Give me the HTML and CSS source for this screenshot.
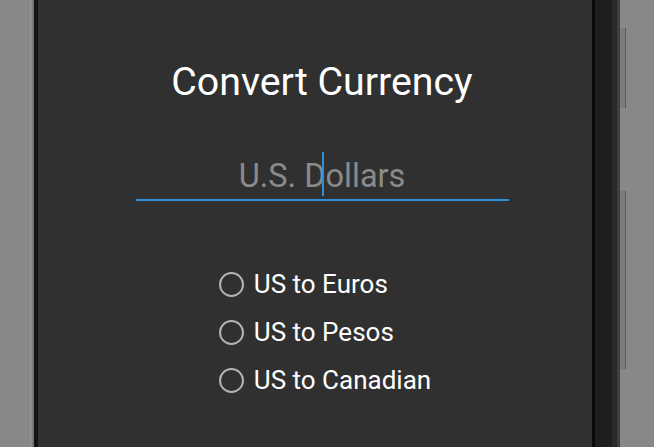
FILE: index.html
```html
<!DOCTYPE html>
<html>
<head>
<meta charset="utf-8">
<link rel="stylesheet" href="styles.css">
</head>
<body>
<div class="desk">
  <div class="side-left"></div>
  <div class="bezel-l1"></div>
  <div class="bezel-l2"></div>
  <main class="screen">
    <div class="content">
      <h1 class="title">Convert Currency</h1>
      <div class="field">
        <span class="hint">U.S. Dollars</span>
        <span class="cursor"></span>
      </div>
      <ul class="radios">
        <li class="radio"><span class="ring"></span><span class="label">US to Euros</span></li>
        <li class="radio"><span class="ring"></span><span class="label">US to Pesos</span></li>
        <li class="radio"><span class="ring"></span><span class="label">US to Canadian</span></li>
      </ul>
    </div>
  </main>
  <div class="bezel-r1"></div>
  <div class="bezel-r2"></div>
  <div class="bezel-r3"></div>
  <div class="bezel-r4"></div>
  <div class="side-right">
    <div class="btn btn-power"></div>
    <div class="btn btn-volume"></div>
  </div>
</div>
</body>
</html>
```

FILE: styles.css
```css
html, body {
  margin: 0;
  padding: 0;
  background: #888888;
}
.desk {
  display: flex;
  width: 654px;
  height: 447px;
  overflow: hidden;
  font-family: Roboto, "Noto Sans", sans-serif;
}
.side-left {
  width: 30px;
  background: #888888;
}
.bezel-l1 {
  width: 4px;
  background: linear-gradient(to right, #9a9a9a, #6a6a6a);
}
.bezel-l2 {
  width: 4px;
  background: #141414;
}
.screen {
  width: 554px;
  background: #303030;
  position: relative;
}
.content {
  display: flex;
  flex-direction: column;
  align-items: center;
  padding-left: 14px;
}
.title {
  margin: 57px 0 0;
  font-size: 39.3px;
  line-height: 50px;
  font-weight: 400;
  color: #ffffff;
}
.field {
  position: relative;
  margin-top: 42px;
  width: 373px;
  height: 50px;
  border-bottom: 2px solid #2e8fd6;
  display: flex;
  justify-content: center;
  align-items: center;
}
.hint {
  font-size: 32.5px;
  color: #8a8a8a;
  line-height: 40px;
  padding-top: 4px;
}
.cursor {
  position: absolute;
  left: 186px;
  top: 3px;
  width: 2px;
  height: 44px;
  background: #2e8fd6;
}
.radios {
  list-style: none;
  margin: 59px 0 0 6px;
  padding: 0;
  display: flex;
  flex-direction: column;
}
.radio {
  display: flex;
  align-items: center;
  height: 48px;
}
.ring {
  width: 21px;
  height: 21px;
  border: 2.5px solid #b4b4b4;
  border-radius: 50%;
  margin-right: 10px;
}
.label {
  font-size: 26px;
  color: #ffffff;
}
.bezel-r1 {
  width: 3px;
  background: #0a0a0a;
}
.bezel-r2 {
  width: 17px;
  background: #1e1e1e;
}
.bezel-r3 {
  width: 5px;
  background: #2a2a2a;
}
.bezel-r4 {
  width: 3px;
  background: #3e3e3e;
}
.side-right {
  flex: 1;
  background: #888888;
  position: relative;
}
.btn {
  position: absolute;
  left: 0;
  width: 5px;
  background: #7c7c7c;
  border-right: 1px solid #5a5a5a;
}
.btn-power {
  top: 28px;
  height: 80px;
}
.btn-volume {
  top: 191px;
  height: 178px;
}
```
